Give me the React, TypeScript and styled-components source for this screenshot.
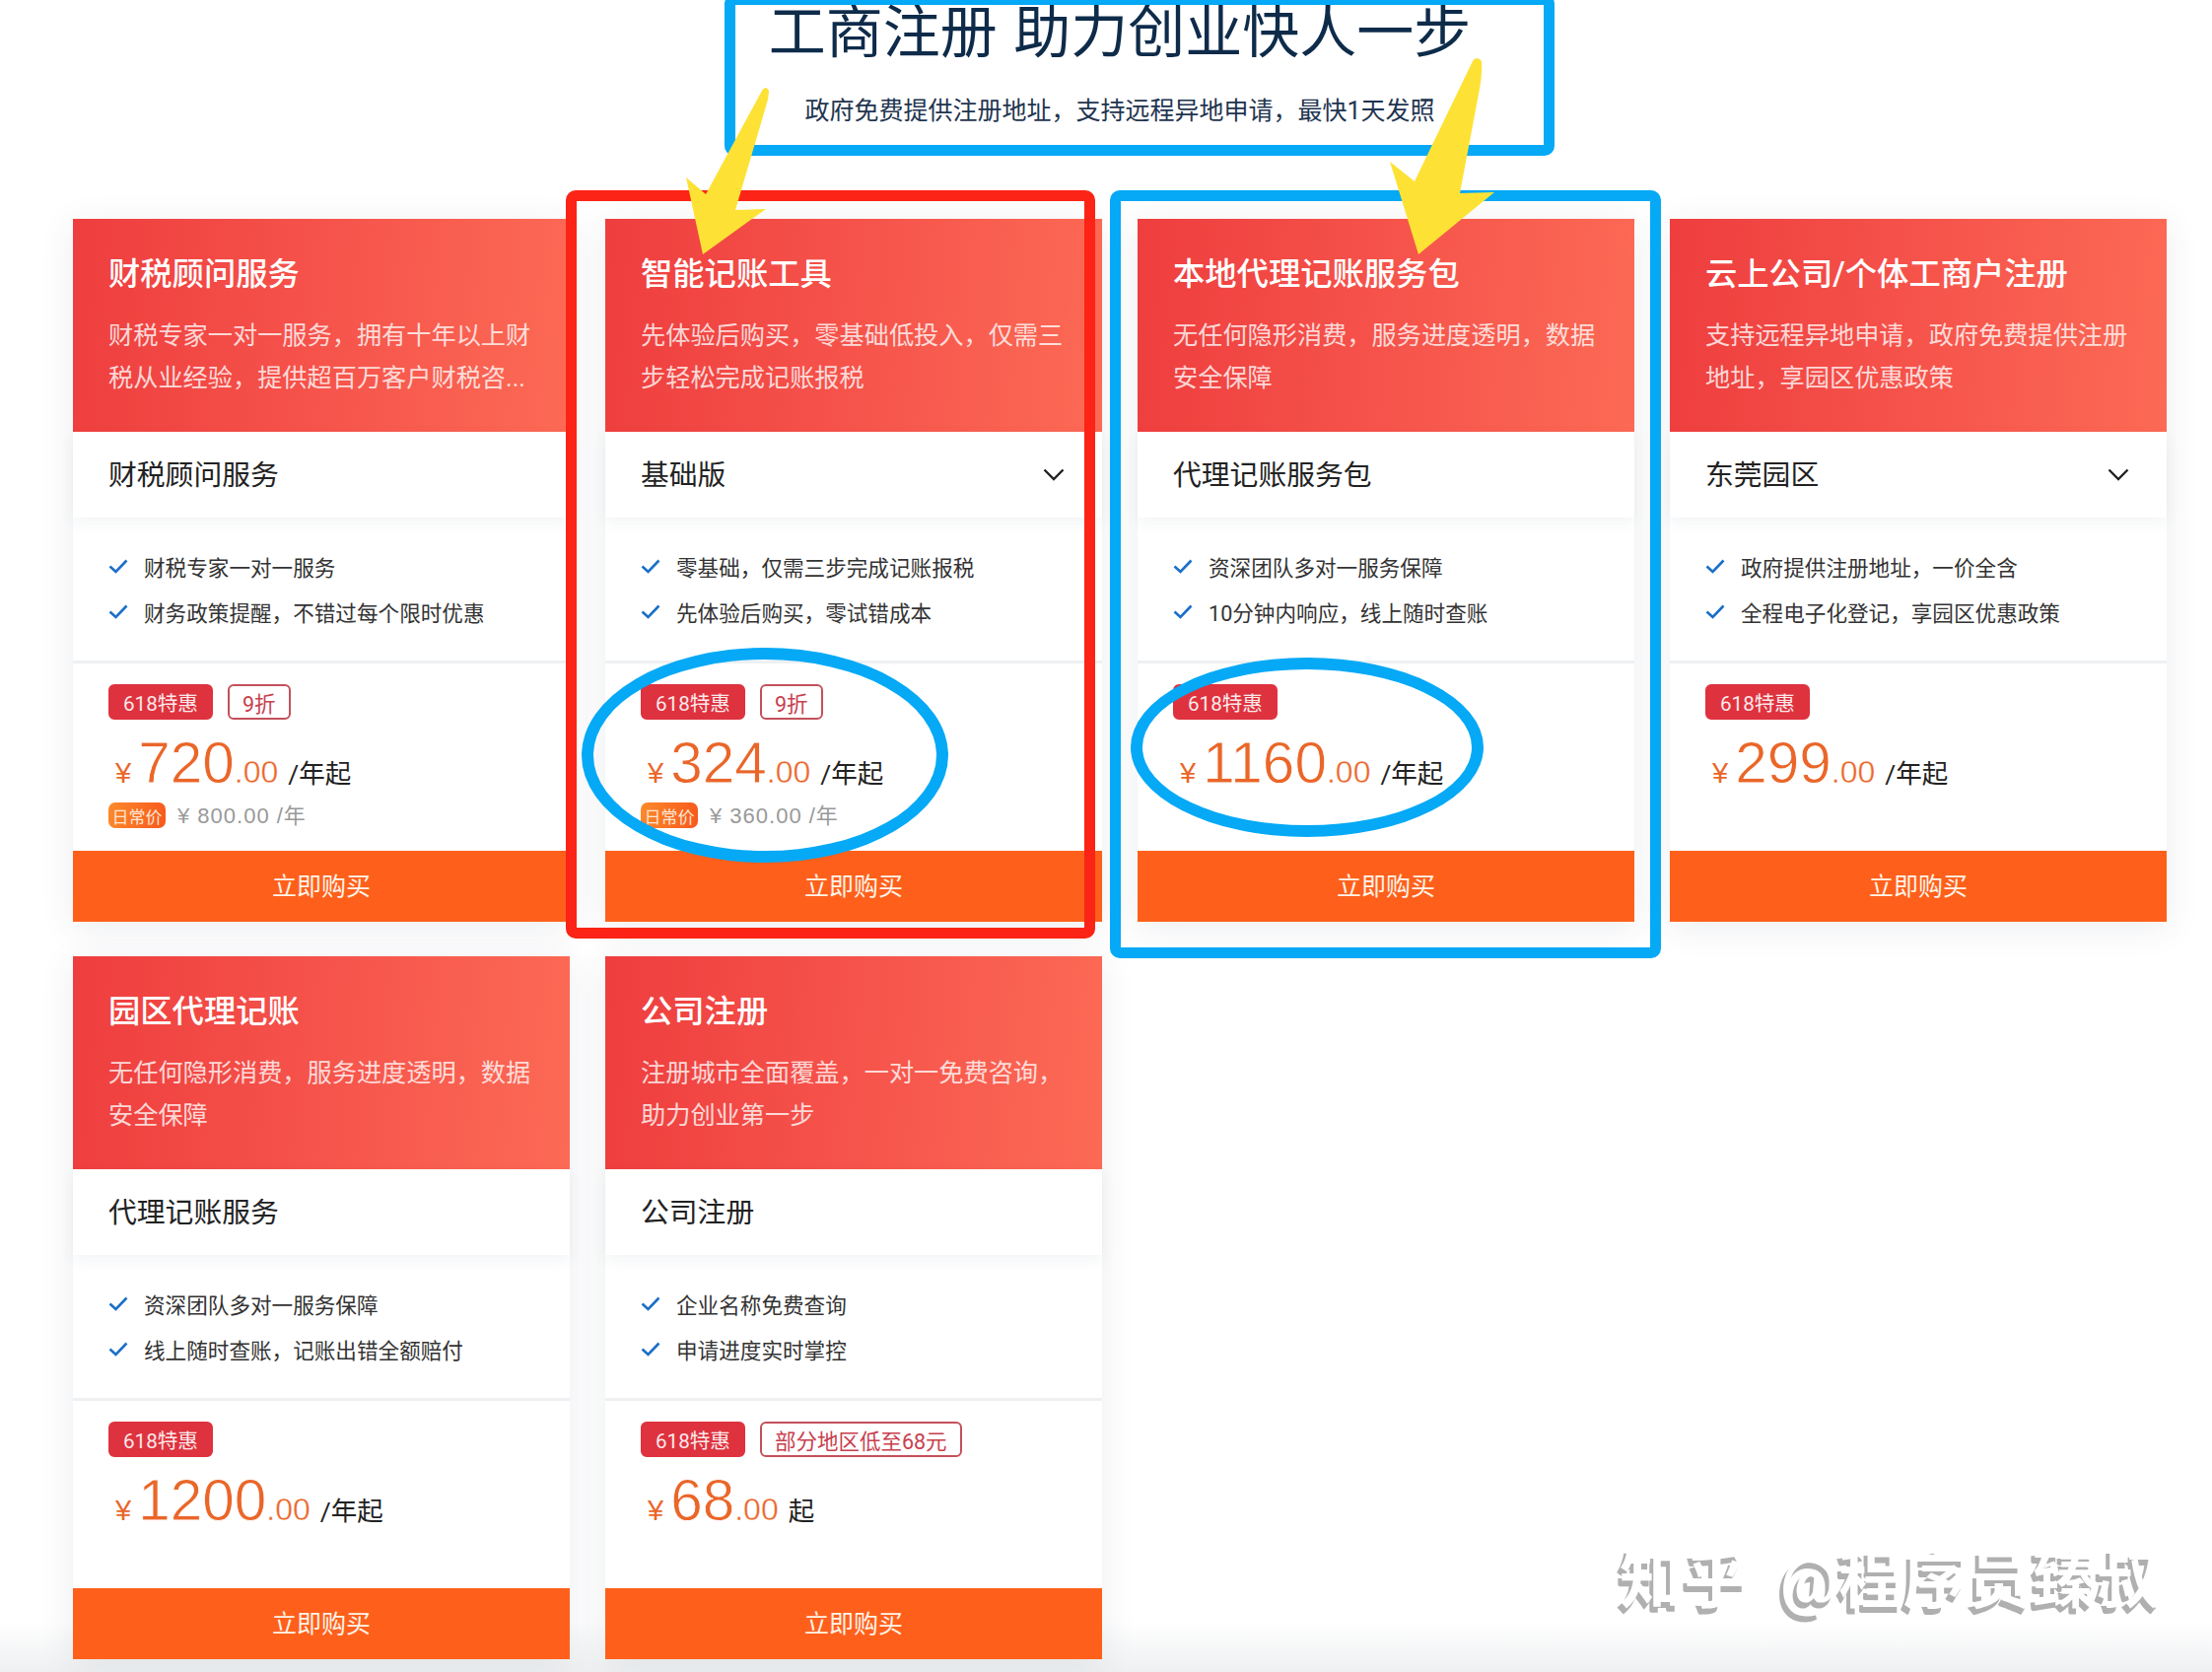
import React from 'react'
import styled, { createGlobalStyle } from 'styled-components'

const FONT = `Roboto, "Noto Sans CJK SC", sans-serif`
const DIGITS = `"Liberation Sans", "Noto Sans CJK SC", sans-serif`

const GlobalStyle = createGlobalStyle`
  html, body {
    margin: 0;
    padding: 0;
    background: #fff;
  }
  * {
    box-sizing: border-box;
  }
`

const Page = styled.div`
  position: relative;
  width: 2244px;
  height: 1696px;
  overflow: hidden;
  font-family: ${FONT};
  background: linear-gradient(to bottom, #fff 0, #fff 1645px, #eef0f1 1696px);
`

const Hero = styled.header`
  height: 222px;
  margin-left: 74px;
  width: 2124px;
  padding-top: 2px;
  text-align: center;
`

const HeroTitle = styled.h1`
  margin: 0;
  font-size: 58px;
  line-height: 62px;
  font-weight: 400;
  word-spacing: 2px;
  color: #0e2b4a;
  white-space: pre;
`

const HeroSub = styled.p`
  margin: 31px 0 0;
  font-size: 25px;
  line-height: 36px;
  color: #1f3550;
`

const CardGrid = styled.main`
  display: grid;
  grid-template-columns: repeat(4, 504px);
  column-gap: 36px;
  row-gap: 35px;
  padding-left: 74px;
`

const Card = styled.article`
  display: flex;
  flex-direction: column;
  height: 713px;
  background: #fff;
  box-shadow: 0 6px 34px rgba(40, 60, 90, 0.09);
`

const CardHead = styled.div`
  height: 216px;
  padding: 34px 36px 0;
  color: #fff;
  background: linear-gradient(95deg, #ee3e3e 0%, #f5514a 45%, #fc6a55 100%);
`

const CardTitle = styled.h2`
  margin: 0;
  font-size: 32.3px;
  line-height: 44px;
  font-weight: 500;
`

const CardDesc = styled.p`
  margin: 20px 0 0;
  font-size: 25.2px;
  line-height: 42.5px;
  color: rgba(255, 255, 255, 0.8);
`

const PlanRow = styled.div`
  position: relative;
  display: flex;
  align-items: center;
  justify-content: space-between;
  height: 87px;
  padding: 0 38px 0 36px;
  font-size: 28.8px;
  color: #222;
  background: #fff;
  box-shadow: 0 5px 14px rgba(40, 60, 90, 0.06);
`

const PlanName = styled.span`
  margin-top: -4px;
`

const Features = styled.ul`
  height: 148px;
  margin: 0;
  padding: 26px 36px 0;
  list-style: none;
  border-bottom: 3px solid #eef0f2;
`

const Feature = styled.li`
  display: flex;
  align-items: center;
  gap: 16px;
  height: 46px;
  font-size: 21.6px;
  color: #333;
`

const PriceBlock = styled.div`
  height: 190px;
  padding: 21px 36px 0;
`

const Tags = styled.div`
  display: flex;
  gap: 15px;
`

const Tag = styled.span<{ $outline?: boolean }>`
  display: inline-flex;
  align-items: center;
  height: 36px;
  padding: 0 13px;
  border-radius: 6px;
  font-size: ${({ $outline }) => ($outline ? '21.5px' : '20.6px')};
  color: ${({ $outline }) => ($outline ? '#c8404e' : '#fbe9ea')};
  background: ${({ $outline }) => ($outline ? '#fff' : '#de323f')};
  border: 2px solid ${({ $outline }) => ($outline ? '#c4505b' : '#de323f')};
`

const PriceRow = styled.div`
  display: flex;
  align-items: baseline;
  height: 56px;
  margin-top: 16px;
  padding-left: 7px;
  line-height: 56px;
  font-family: ${DIGITS};
  color: #ea6629;
`

const Yen = styled.span`
  font-size: 29px;
  margin-right: 7px;
`

// the reference digits are a light cut, a thin white edge takes the weight off
const Amount = styled.span`
  font-size: 58.5px;
  -webkit-text-stroke: 0.8px #fff;
`

const Cents = styled.span`
  font-size: 32px;
  -webkit-text-stroke: 0.4px #fff;
`

const Unit = styled.span`
  margin-left: 10px;
  font-family: ${FONT};
  font-size: 26.5px;
  color: #222;
`

const OldRow = styled.div`
  display: flex;
  align-items: center;
  gap: 12px;
  height: 26px;
  margin-top: 12px;
`

const OldBadge = styled.span`
  display: inline-flex;
  align-items: center;
  justify-content: center;
  width: 58px;
  height: 26px;
  border-radius: 7px;
  font-size: 17px;
  color: #fde6d3;
  background: linear-gradient(100deg, #fb8a2c, #f8581c);
`

const OldPrice = styled.span`
  margin-top: -4px;
  font-family: ${DIGITS};
  font-size: 22px;
  letter-spacing: 1px;
  color: #999;
`

const BuyButton = styled.button`
  height: 72px;
  border: 0;
  padding: 0 0 4px;
  font-family: ${FONT};
  font-size: 25px;
  color: #fff3e8;
  background: #fe601b;
`

const Box = styled.div<{ $x: number; $y: number; $w: number; $h: number; $color: string }>`
  position: absolute;
  left: ${({ $x }) => $x}px;
  top: ${({ $y }) => $y}px;
  width: ${({ $w }) => $w}px;
  height: ${({ $h }) => $h}px;
  border: 11px solid ${({ $color }) => $color};
  border-radius: 10px;
  pointer-events: none;
`

const Ellipse = styled(Box)`
  border-width: 12px;
  border-radius: 50%;
`

const ArrowLayer = styled.svg`
  position: absolute;
  left: 0;
  top: 0;
  pointer-events: none;
`

const Watermark = styled.div`
  position: absolute;
  left: 1643px;
  top: 1566px;
  font-size: 64px;
  line-height: 76px;
  font-weight: 700;
  letter-spacing: 1.5px;
  word-spacing: 15px;
  white-space: pre;
  color: #fff;
  text-shadow: -4px 5px 0 #b0b0b0, -3px 6px 0 #b0b0b0;
`

const Chevron = () => (
  <svg width="22" height="13" viewBox="0 0 22 13" fill="none">
    <path d="M1.5 1.5 L11 11 L20.5 1.5" stroke="#222" strokeWidth="2.4" />
  </svg>
)

const Check = () => (
  <svg width="20" height="15" viewBox="0 0 20 15" fill="none">
    <path d="M1.5 7.5 L7.5 13 L18.5 1.5" stroke="#1b6fc8" strokeWidth="2.6" />
  </svg>
)

interface Product {
  title: string
  desc: string
  plan: string
  hasMenu?: boolean
  features: string[]
  tag?: string
  amount: string
  unit: string
  oldPrice?: string
}

const products: Product[] = [
  {
    title: '财税顾问服务',
    desc: '财税专家一对一服务，拥有十年以上财税从业经验，提供超百万客户财税咨...',
    plan: '财税顾问服务',
    features: ['财税专家一对一服务', '财务政策提醒，不错过每个限时优惠'],
    tag: '9折',
    amount: '720',
    unit: '/年起',
    oldPrice: '¥ 800.00 /年',
  },
  {
    title: '智能记账工具',
    desc: '先体验后购买，零基础低投入，仅需三步轻松完成记账报税',
    plan: '基础版',
    hasMenu: true,
    features: ['零基础，仅需三步完成记账报税', '先体验后购买，零试错成本'],
    tag: '9折',
    amount: '324',
    unit: '/年起',
    oldPrice: '¥ 360.00 /年',
  },
  {
    title: '本地代理记账服务包',
    desc: '无任何隐形消费，服务进度透明，数据安全保障',
    plan: '代理记账服务包',
    features: ['资深团队多对一服务保障', '10分钟内响应，线上随时查账'],
    amount: '1160',
    unit: '/年起',
  },
  {
    title: '云上公司/个体工商户注册',
    desc: '支持远程异地申请，政府免费提供注册地址，享园区优惠政策',
    plan: '东莞园区',
    hasMenu: true,
    features: ['政府提供注册地址，一价全含', '全程电子化登记，享园区优惠政策'],
    amount: '299',
    unit: '/年起',
  },
  {
    title: '园区代理记账',
    desc: '无任何隐形消费，服务进度透明，数据安全保障',
    plan: '代理记账服务',
    features: ['资深团队多对一服务保障', '线上随时查账，记账出错全额赔付'],
    amount: '1200',
    unit: '/年起',
  },
  {
    title: '公司注册',
    desc: '注册城市全面覆盖，一对一免费咨询，助力创业第一步',
    plan: '公司注册',
    features: ['企业名称免费查询', '申请进度实时掌控'],
    tag: '部分地区低至68元',
    amount: '68',
    unit: '起',
  },
]

function ProductCard({ product }: { product: Product }) {
  return (
    <Card>
      <CardHead>
        <CardTitle>{product.title}</CardTitle>
        <CardDesc>{product.desc}</CardDesc>
      </CardHead>
      <PlanRow>
        <PlanName>{product.plan}</PlanName>
        {product.hasMenu && <Chevron />}
      </PlanRow>
      <Features>
        {product.features.map((feature) => (
          <Feature key={feature}>
            <Check />
            {feature}
          </Feature>
        ))}
      </Features>
      <PriceBlock>
        <Tags>
          <Tag>618特惠</Tag>
          {product.tag && <Tag $outline>{product.tag}</Tag>}
        </Tags>
        <PriceRow>
          <Yen>¥</Yen>
          <Amount>{product.amount}</Amount>
          <Cents>.00</Cents>
          <Unit>{product.unit}</Unit>
        </PriceRow>
        {product.oldPrice && (
          <OldRow>
            <OldBadge>日常价</OldBadge>
            <OldPrice>{product.oldPrice}</OldPrice>
          </OldRow>
        )}
      </PriceBlock>
      <BuyButton>立即购买</BuyButton>
    </Card>
  )
}

export default function App() {
  return (
    <Page>
      <GlobalStyle />
      <Hero>
        <HeroTitle>工商注册 助力创业快人一步</HeroTitle>
        <HeroSub>政府免费提供注册地址，支持远程异地申请，最快1天发照</HeroSub>
      </Hero>
      <CardGrid>
        {products.map((product) => (
          <ProductCard key={product.title} product={product} />
        ))}
      </CardGrid>

      {/* hand-drawn annotations on top of the page */}
      <Box $x={735} $y={-6} $w={842} $h={164} $color="#05a9f6" />
      <Box $x={574} $y={193} $w={537} $h={759} $color="#fb2416" />
      <Box $x={1126} $y={193} $w={559} $h={779} $color="#05a9f6" />
      <Ellipse $x={590} $y={657} $w={372} $h={218} $color="#05a9f6" />
      <Ellipse $x={1147} $y={667} $w={358} $h={182} $color="#05a9f6" />
      <ArrowLayer width="2244" height="400" viewBox="0 0 2244 400">
        <path
          d="M773 92 Q777 86 780 92 Q780 100 777 108 L746 213 L777 212 L713 258 L696 180 L716 197 Z"
          fill="#fde235"
        />
        <path
          d="M1494 62 Q1498 56 1503 62 Q1504 72 1501 90 L1481 196 L1516 195 L1439 258 L1410 164 L1435 184 Z"
          fill="#fde235"
        />
      </ArrowLayer>
      <Watermark>知乎 @程序员臻叔</Watermark>
    </Page>
  )
}
